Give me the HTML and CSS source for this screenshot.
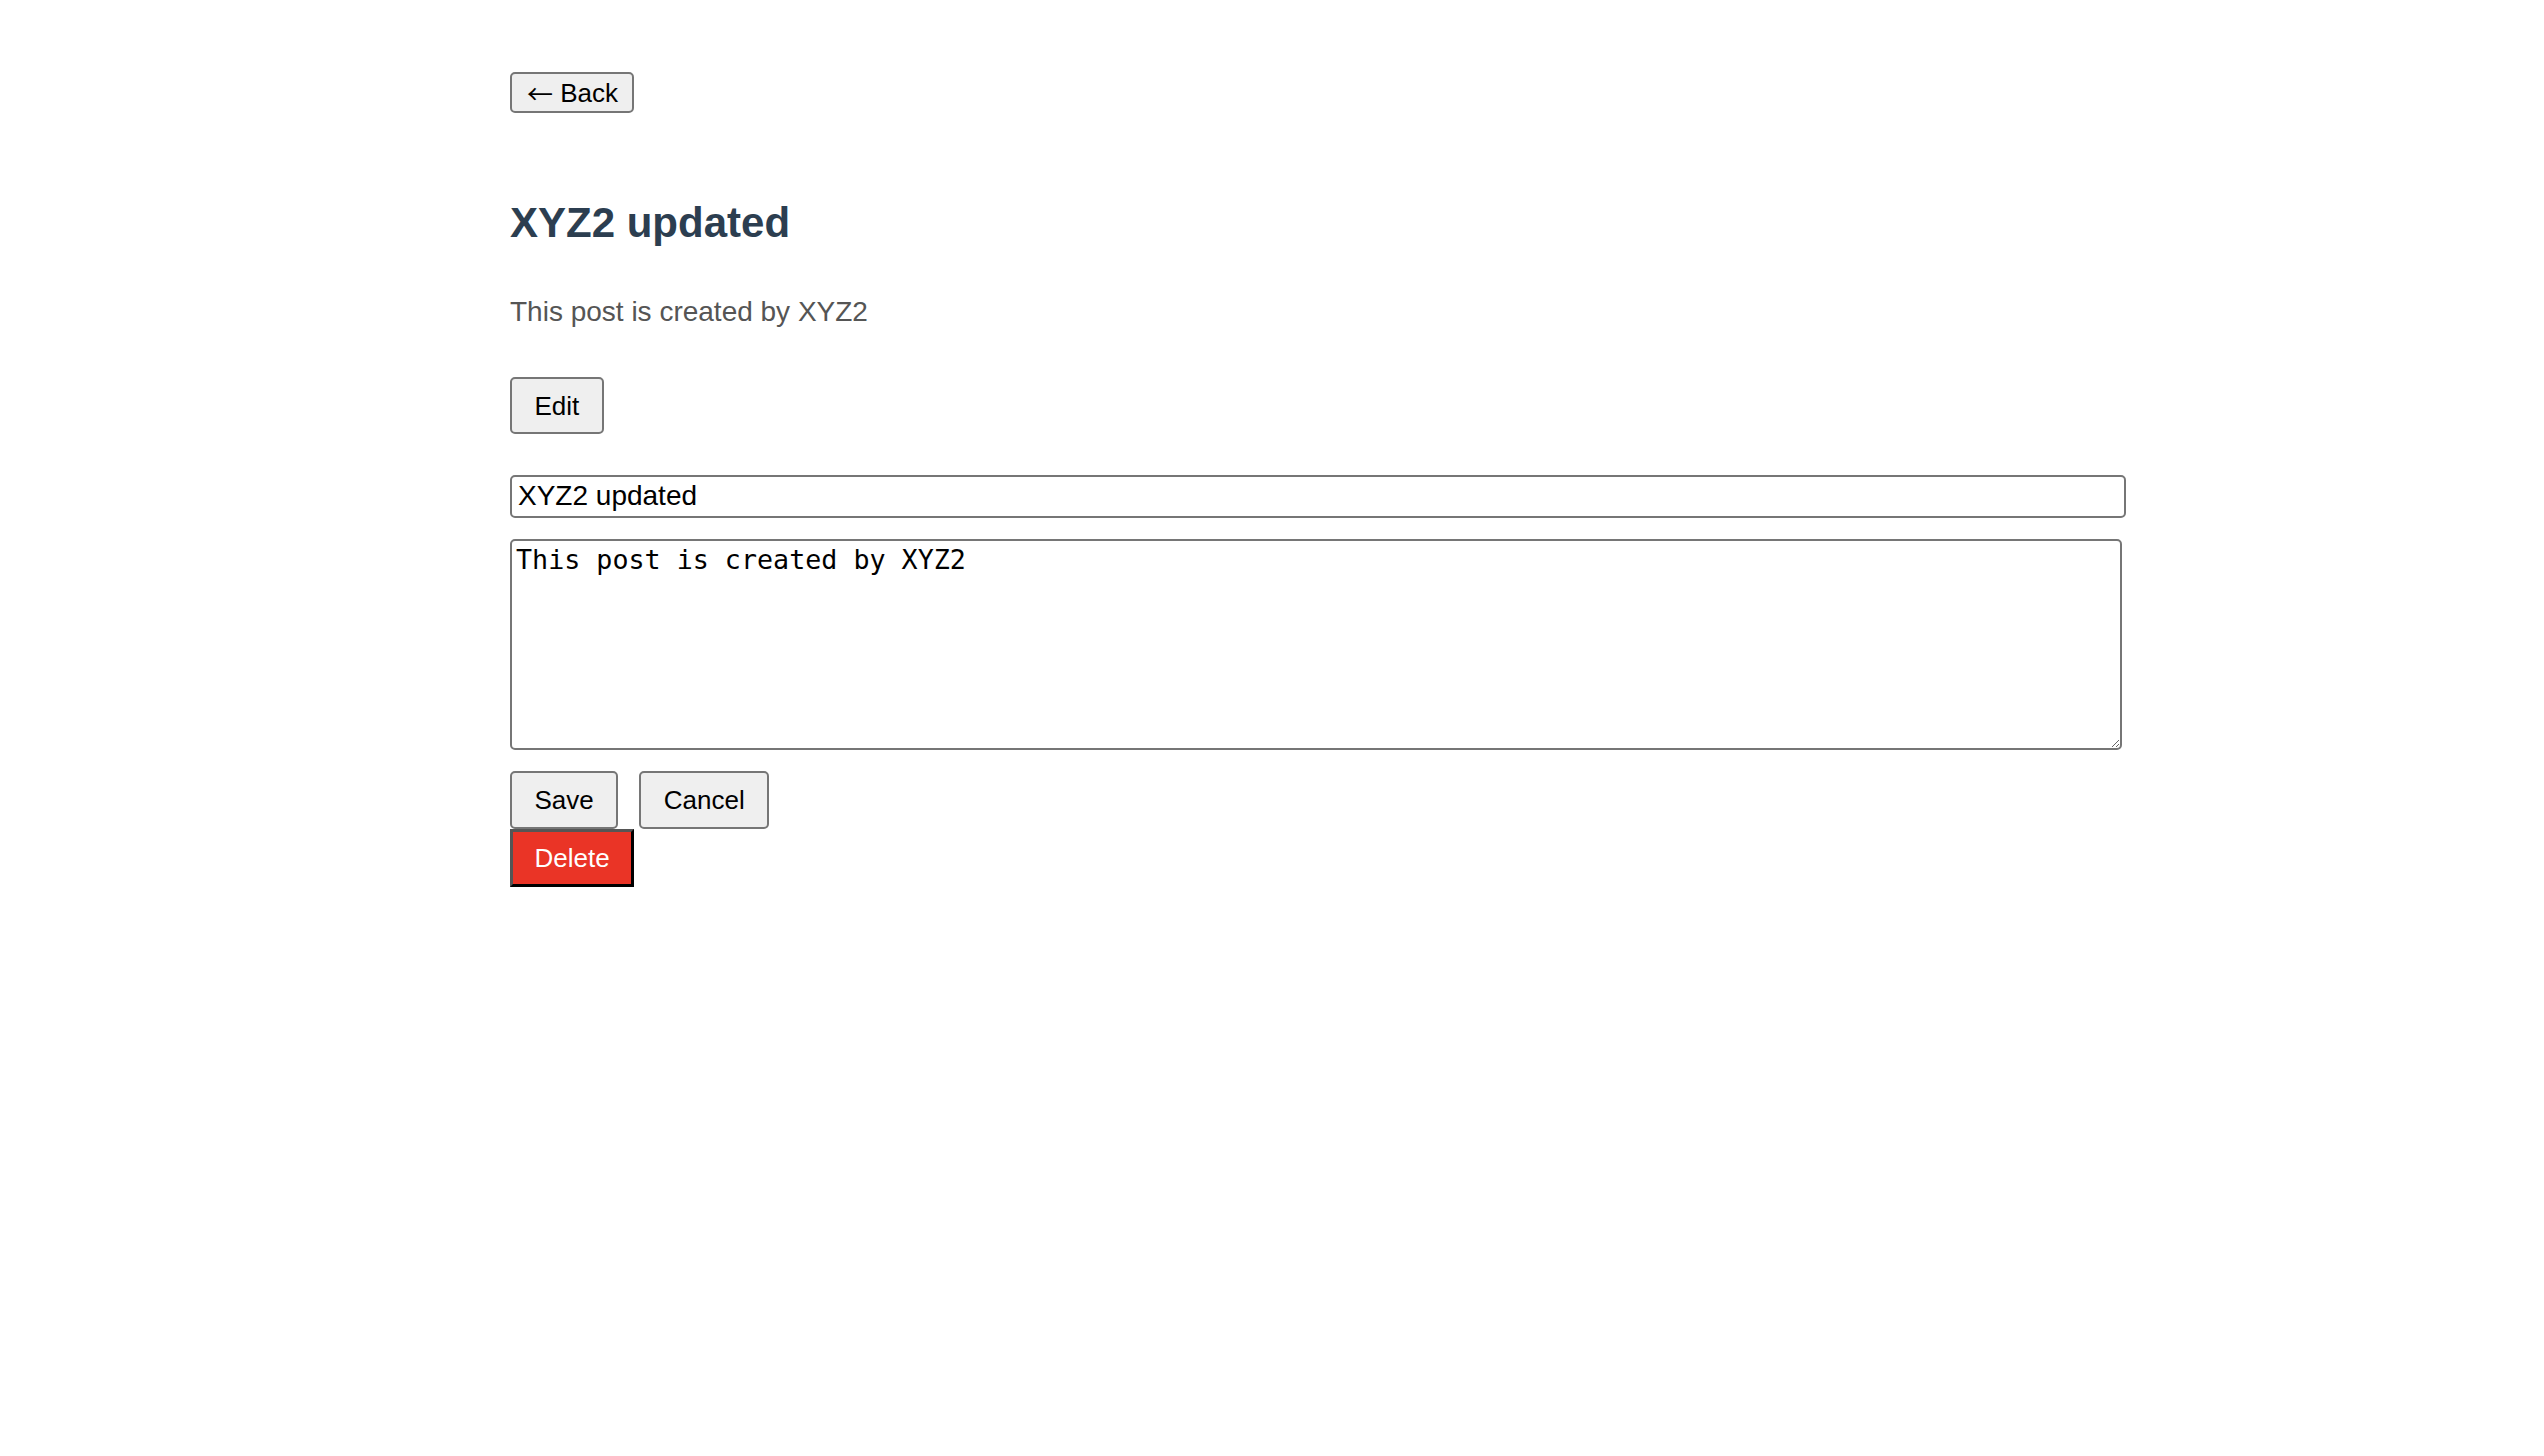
FILE: index.html
```html
<!DOCTYPE html>
<html lang="en">
<head>
<meta charset="utf-8">
<title>XYZ2 updated</title>
<link rel="stylesheet" href="styles.css">
</head>
<body>
<main class="page">
  <div class="back-row"><button class="btn btn-back"><span class="arrow">←</span> Back</button></div>
  <h1 class="title">XYZ2 updated</h1>
  <p class="body-text">This post is created by XYZ2</p>
  <div class="edit-row"><button class="btn btn-edit">Edit</button></div>
  <form class="edit-form">
    <input class="field-title" type="text" value="XYZ2 updated">
    <textarea class="field-body">This post is created by XYZ2</textarea>
    <div class="actions">
      <button type="button" class="btn btn-action">Save</button>
      <button type="button" class="btn btn-action">Cancel</button>
    </div>
    <div class="delete-row"><button type="button" class="btn-delete">Delete</button></div>
  </form>
</main>
</body>
</html>
```

FILE: styles.css
```css
html, body {
  margin: 0;
  padding: 0;
  background: #ffffff;
}

body {
  font-family: "Liberation Sans", Arial, sans-serif;
}

.page {
  padding: 72px 0 0 510px;
  display: flex;
  flex-direction: column;
  align-items: flex-start;
}

.btn {
  font-family: "Liberation Sans", Arial, sans-serif;
  font-size: 26px;
  line-height: 30px;
  color: #000;
  background: #efefef;
  border: 2px solid #767676;
  border-radius: 5px;
  margin: 0;
}

.btn-back {
  padding: 0 14px 0 15px;
  height: 41px;
  white-space: nowrap;
}

.arrow {
  font-family: "Noto Sans CJK JP", "DejaVu Sans", sans-serif;
  font-size: 26px;
  line-height: 26px;
  display: inline-block;
  vertical-align: -2px;
}

.title {
  margin: 86px 0 0 0;
  font-size: 42px;
  line-height: 47px;
  font-weight: bold;
  color: #2c3e50;
}

.body-text {
  margin: 50px 0 0 0;
  font-size: 28px;
  line-height: 32px;
  color: #555555;
}

.edit-row {
  margin-top: 48.5px;
}

.btn-edit {
  padding: 12px 22.5px;
  height: 57px;
}

.edit-form {
  margin: 41px 0 0 0;
  display: flex;
  flex-direction: column;
  align-items: flex-start;
}

.field-title {
  box-sizing: border-box;
  width: 1616px;
  height: 43px;
  margin: 0;
  padding: 0 6px;
  font-family: "Liberation Sans", Arial, sans-serif;
  font-size: 28px;
  color: #000;
  border: 2px solid #767676;
  border-radius: 5px;
  background: #fff;
}

.field-body {
  box-sizing: border-box;
  width: 1612px;
  height: 211px;
  margin: 21px 0 0 0;
  padding: 3.5px 4px;
  font-family: "DejaVu Sans Mono", monospace;
  font-size: 26.7px;
  color: #000;
  border: 2px solid #767676;
  border-radius: 5px;
  background: #fff;
}

.actions {
  margin-top: 21px;
  display: flex;
  gap: 21px;
}

.btn-action {
  padding: 12px 22.5px;
  height: 58px;
}

.btn-delete {
  font-family: "Liberation Sans", Arial, sans-serif;
  font-size: 26px;
  line-height: 30px;
  color: #ffffff;
  background: #ea3426;
  border-style: solid;
  border-width: 3px;
  border-color: #555555 #000000 #000000 #555555;
  border-radius: 0;
  padding: 11px 21.5px;
  height: 58px;
  margin: 0;
}
```
